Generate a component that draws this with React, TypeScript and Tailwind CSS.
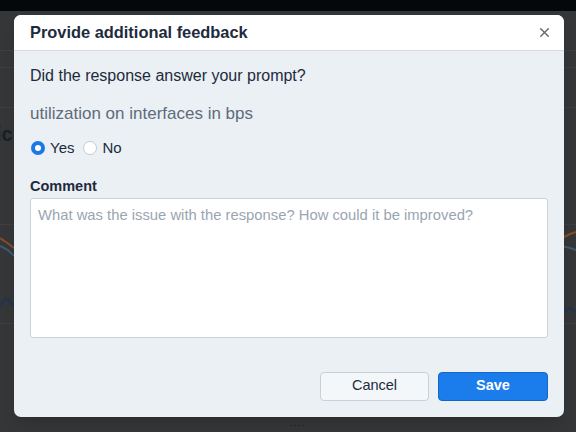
import { X } from "lucide-react";

function Backdrop() {
  return (
    <div className="absolute inset-0 flex flex-col bg-[#343638]">
      <div className="h-[11px] bg-[#05080b]" />
      <div className="relative flex-1">
        <div className="absolute left-0 right-0 top-[39px] h-px bg-[#3d3f41]" />
        <div className="absolute left-0 right-0 top-[56px] h-px bg-[#3d3f41]" />
        <div className="absolute left-0 right-0 top-[96px] h-px bg-[#3d3f41]" />
        <div className="absolute left-0 right-0 top-[213px] h-px bg-[#3d3f41]" />
        <div className="absolute left-0 right-0 top-[312px] h-px bg-[#3d3f41]" />
        <div className="absolute left-[-4px] top-[108px] text-[20px] font-bold text-[#1c1e20]">ic</div>
        <svg className="absolute left-0 top-[215px]" width="576" height="90" viewBox="0 0 576 90">
          <path d="M0 12 L6 16 L14 22" stroke="#8a4a2a" strokeWidth="2" fill="none" />
          <path d="M0 20 L8 24 L14 30" stroke="#3d5a70" strokeWidth="2" fill="none" />
          <path d="M0 80 L6 72 L14 80" stroke="#1e3550" strokeWidth="2" fill="none" />
          <path d="M562 12 L570 8 L576 6" stroke="#8a4a2a" strokeWidth="2" fill="none" />
          <path d="M562 20 L570 22 L576 24" stroke="#3d5a70" strokeWidth="2" fill="none" />
          <path d="M564 86 L570 82 L576 86" stroke="#1e3550" strokeWidth="2" fill="none" />
        </svg>
        <div className="absolute left-[290px] top-[404px] text-[10px] tracking-[1px] text-[#1c1e20]">....</div>
      </div>
    </div>
  );
}

export default function App() {
  return (
    <div className="relative h-[432px] w-[576px] overflow-hidden font-['Liberation_Sans',Arial,sans-serif]">
      <Backdrop />
      <div className="absolute left-[14px] top-[15px] w-[550px] overflow-hidden rounded-[7px] bg-[#ebf0f5] shadow-lg">
        <div className="flex h-[36px] items-center justify-between border-b border-[#d5dbe1] bg-white pl-[16px] pr-[12px]">
          <h2 className="text-[16.4px] font-bold text-[#1d2b3c]">Provide additional feedback</h2>
          <X className="h-[15px] w-[15px] text-[#5f6b7a]" strokeWidth={2.25} />
        </div>
        <div className="flex flex-col px-[16px] pb-[16px]">
          <p className="mt-[13px] text-[16px] text-[#1d2b3c]">Did the response answer your prompt?</p>
          <p className="mt-[13px] text-[17px] text-[#5f6b7a]">utilization on interfaces in bps</p>
          <div className="mt-[10px] flex items-center gap-[5px] text-[15px] text-[#1d2b3c]">
            <span className="ml-[1px] flex h-[14px] w-[14px] items-center justify-center rounded-full bg-[#1b78e8]">
              <span className="h-[6px] w-[6px] rounded-full bg-white" />
            </span>
            <span>Yes</span>
            <span className="ml-[4px] h-[14px] w-[14px] rounded-full border border-[#c3cad2] bg-white" />
            <span>No</span>
          </div>
          <label className="mt-[17px] text-[14.5px] font-bold text-[#1d2b3c]">Comment</label>
          <textarea
            className="h-[140px] w-full resize-none rounded-[3px] border border-[#cbd2d9] bg-white px-[7px] py-[5px] text-[14.8px] text-[#1d2b3c] outline-none placeholder:text-[#9aa5b1]"
            placeholder="What was the issue with the response? How could it be improved?"
          />
          <div className="mt-[34px] flex justify-end gap-[9px]">
            <button className="h-[29px] w-[109px] rounded-[4px] border border-[#c9d0d7] bg-[#f4f7fa] text-[14.5px] text-[#1d2b3c]">
              Cancel
            </button>
            <button className="h-[29px] w-[110px] rounded-[4px] border border-[#1666c5] bg-[#1b7cec] text-[14.5px] font-bold text-white">
              Save
            </button>
          </div>
        </div>
      </div>
    </div>
  );
}
